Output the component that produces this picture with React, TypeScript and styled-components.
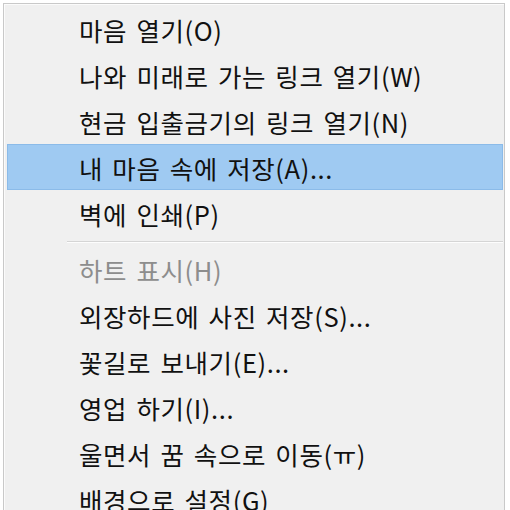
import styled, { createGlobalStyle } from "styled-components"

const GlobalStyle = createGlobalStyle`
  html, body {
    margin: 0;
    padding: 0;
    background: #ffffff;
    overflow: hidden;
  }
`

const Screen = styled.div`
  width: 510px;
  height: 510px;
  padding: 3px 0 0 3px;
  box-sizing: border-box;
  overflow: hidden;
`

const Menu = styled.ul`
  list-style: none;
  margin: 0;
  width: 502px;
  padding: 2px 1px 2px 3px;
  box-sizing: border-box;
  background: #f0f0f0;
  border: 1px solid #c9c9c9;
  box-shadow: inset 1px 1px 0 #fbfbfb;
  font-family: "Noto Sans CJK KR", "Noto Sans", sans-serif;
  font-size: 25.5px;
  font-weight: 400;
  color: #111111;
`

const Item = styled.li<{ active?: boolean; disabled?: boolean }>`
  height: 46px;
  display: flex;
  align-items: center;
  padding-left: 71px;
  box-sizing: border-box;
  letter-spacing: 0.6px;
  word-spacing: 3px;
  white-space: nowrap;
  color: ${(p) => (p.disabled ? "#8d8d8d" : "#111111")};
  background: ${(p) => (p.active ? "#9fcaf2" : "transparent")};
  border: 1px solid ${(p) => (p.active ? "#8bbbe9" : "transparent")};
`

const Separator = styled.li`
  height: 10px;
  display: flex;
  align-items: center;
  padding-left: 60px;
  &::after {
    content: "";
    flex: 1;
    height: 1px;
    background: #d5d5d5;
    box-shadow: 0 1px 0 #fdfdfd;
  }
`

type Entry = { label: string; active?: boolean; disabled?: boolean } | "sep"

const entries: Entry[] = [
  { label: "마음 열기(O)" },
  { label: "나와 미래로 가는 링크 열기(W)" },
  { label: "현금 입출금기의 링크 열기(N)" },
  { label: "내 마음 속에 저장(A)...", active: true },
  { label: "벽에 인쇄(P)" },
  "sep",
  { label: "하트 표시(H)", disabled: true },
  { label: "외장하드에 사진 저장(S)..." },
  { label: "꽃길로 보내기(E)..." },
  { label: "영업 하기(I)..." },
  { label: "울면서 꿈 속으로 이동(ㅠ)" },
  { label: "배경으로 설정(G)" },
]

export default function App() {
  return (
    <Screen>
      <GlobalStyle />
      <Menu>
        {entries.map((e, i) =>
          e === "sep" ? (
            <Separator key={i} />
          ) : (
            <Item key={i} active={e.active} disabled={e.disabled}>
              {e.label}
            </Item>
          )
        )}
      </Menu>
    </Screen>
  )
}
